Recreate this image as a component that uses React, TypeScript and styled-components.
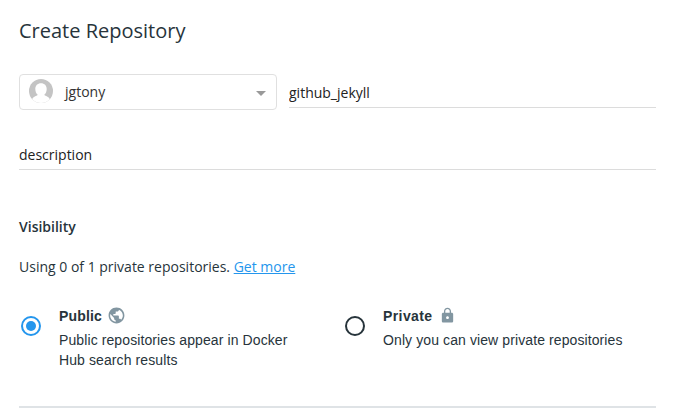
import React, { useState } from 'react';
import styled, { createGlobalStyle } from 'styled-components';
import { MdLock, MdPublic } from 'react-icons/md';

const GlobalStyle = createGlobalStyle`
  * { box-sizing: border-box; }
  body { margin: 0; background: #fff; }
`;

const Page = styled.main`
  width: 690px;
  height: 420px;
  padding: 17px 34px 0 19px;
  overflow: hidden;
  background: #fff;
  color: #27343b;
  font: 14px/20px "Open Sans", sans-serif;
`;

const Title = styled.h1`
  margin: 0 0 29px;
  font-size: 20px;
  line-height: 28px;
  font-weight: 400;
`;

const NameRow = styled.div`
  display: flex;
  align-items: flex-start;
  gap: 12px;
  height: 36px;
`;

const Select = styled.button`
  display: flex;
  align-items: center;
  width: 258px;
  height: 36px;
  padding: 0 10px 0 9px;
  border: 1px solid #e0e0e0;
  border-radius: 4px;
  background: #fff;
  color: #333;
  font: inherit;
`;

const Avatar = styled.svg`
  width: 24px;
  height: 24px;
  margin: -2px 12px 0 0;
`;

const Owner = styled.span`
  flex: 1;
  text-align: left;
`;

const Caret = styled.svg`
  width: 10px;
  height: 5px;
  margin-top: 3px;
`;

const Field = styled.input`
  display: block;
  height: 29px;
  padding: 0 0 1px;
  border: 0;
  border-bottom: 1px solid #dcdcdc;
  outline: 0;
  background: transparent;
  color: #222;
  font: inherit;
`;

const NameField = styled(Field)`
  flex: 1;
  min-width: 0;
  margin-top: 5px;
`;

const DescriptionField = styled(Field)`
  width: 637px;
  margin-top: 31px;
`;

const Heading = styled.h2`
  margin: 47px 0 20px;
  font-size: 14px;
  line-height: 20px;
  font-weight: 600;
`;

const Usage = styled.p`
  margin: 0;
`;

const Link = styled.a`
  color: #2496ed;
  text-decoration: underline;
`;

const Options = styled.div`
  display: grid;
  grid-template-columns: 324px 1fr;
  margin-top: 29px;
  height: 100px;
`;

const Option = styled.label`
  display: flex;
  align-items: flex-start;
  padding-left: 2px;
  font-family: "Liberation Sans", Arial, sans-serif;
`;

const Radio = styled.input`
  appearance: none;
  flex: none;
  display: grid;
  place-items: center;
  width: 20px;
  height: 20px;
  margin: 10px 18px 0 0;
  border: 2px solid #27343b;
  border-radius: 50%;

  &:checked { border-color: #2496ed; }
  &:checked::before {
    content: "";
    width: 10px;
    height: 10px;
    border-radius: 50%;
    background: #2496ed;
  }
`;

const OptionText = styled.div`
  width: 250px;
  letter-spacing: 0.1px;
`;

const OptionTitle = styled.div<{ $gap: number; $tracking: number }>`
  display: flex;
  align-items: center;
  gap: ${({ $gap }) => $gap}px;
  height: 20px;
  margin-bottom: 4px;
  font-weight: 700;
  letter-spacing: ${({ $tracking }) => $tracking}px;

  svg { color: #8296a1; margin-top: -2px; }
`;

const Divider = styled.hr`
  width: 637px;
  height: 2px;
  margin: 0;
  border: 0;
  background: #dfe3e6;
`;

export default function App() {
  const [visibility, setVisibility] = useState('public');
  const [name, setName] = useState('github_jekyll');
  const [description, setDescription] = useState('description');

  return (
    <>
      <GlobalStyle />
      <Page>
        <Title>Create Repository</Title>
        <NameRow>
          <Select type="button">
            <Avatar viewBox="0 0 24 24">
              <defs>
                <clipPath id="avatar-clip"><circle cx="12" cy="12" r="12" /></clipPath>
              </defs>
              <g clipPath="url(#avatar-clip)">
                <rect width="24" height="24" fill="#c4c4c4" />
                <path
                  d="M12 4.300c-3.500 0-5.700 2.400-5.700 5.700 0 2.500 1 4.600 2.400 5.800-.3 1.200-4.700 1.400-5.700 5V24h18v-3.200c-1-3.600-5.400-3.800-5.700-5 1.400-1.200 2.400-3.300 2.400-5.800 0-3.300-2.200-5.700-5.700-5.700z"
                  fill="#fff"
                />
              </g>
            </Avatar>
            <Owner>jgtony</Owner>
            <Caret viewBox="0 0 10 5"><path d="M0 0h10L5 5z" fill="#999" /></Caret>
          </Select>
          <NameField value={name} onChange={(e) => setName(e.target.value)} />
        </NameRow>
        <DescriptionField value={description} onChange={(e) => setDescription(e.target.value)} />
        <Heading>Visibility</Heading>
        <Usage>Using 0 of 1 private repositories. <Link href="#">Get more</Link></Usage>
        <Options>
          <Option>
            <Radio type="radio" name="visibility" checked={visibility === 'public'} onChange={() => setVisibility('public')} />
            <OptionText>
              <OptionTitle $gap={5} $tracking={0.15}>Public <MdPublic size={19} /></OptionTitle>
              Public repositories appear in Docker Hub search results
            </OptionText>
          </Option>
          <Option>
            <Radio type="radio" name="visibility" checked={visibility === 'private'} onChange={() => setVisibility('private')} />
            <OptionText>
              <OptionTitle $gap={6} $tracking={0.4}>Private <MdLock size={17} /></OptionTitle>
              Only you can view private repositories
            </OptionText>
          </Option>
        </Options>
        <Divider />
      </Page>
    </>
  );
}
